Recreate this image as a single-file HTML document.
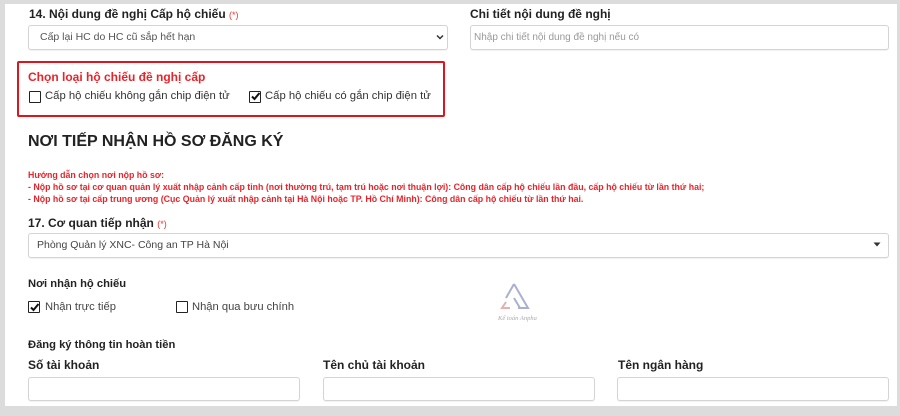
<!DOCTYPE html>
<html><head><meta charset="utf-8"><style>
*{margin:0;padding:0;box-sizing:border-box}
body{width:900px;height:416px;background:#dcdcdc;position:relative;overflow:hidden;font-family:"Liberation Sans","DejaVu Sans",sans-serif;color:#222}
#w{position:absolute;left:5px;top:4px;width:892px;height:402px;background:#fff}
.a{position:absolute;white-space:nowrap}
.lb{font-size:12px;font-weight:bold;color:#222}
.in{position:absolute;border:1px solid #d4d4d4;border-radius:3px;background:#fff;box-shadow:0 1px 1px rgba(0,0,0,.06)}
.ph{font-size:10.5px;color:#666}
.cb{position:absolute;width:12px;height:12px;border:1.5px solid #222;border-radius:1px;background:#fff}
.st{color:#e33;font-weight:normal;font-size:9px}
.red{color:#e8242b;font-size:8.8px;font-weight:bold}
</style></head><body>
<div id="w"></div>
<div class="a lb" style="left:29px;top:7px">14. Nội dung đề nghị Cấp hộ chiếu <span class="st">(*)</span></div>
<div class="in" style="left:28px;top:25px;width:420px;height:25px"></div>
<div class="a ph" style="left:40px;top:31px;color:#555">Cấp lại HC do HC cũ sắp hết hạn</div>
<svg class="a" style="left:436px;top:34px" width="8" height="6" viewBox="0 0 8 6"><path d="M1 1.5L4 4.5L7 1.5" stroke="#333" stroke-width="1.5" fill="none"/></svg>
<div class="a lb" style="left:470px;top:7px">Chi tiết nội dung đề nghị</div>
<div class="in" style="left:470px;top:25px;width:419px;height:25px"></div>
<div class="a" style="left:474px;top:32px;font-size:10px;color:#999">Nhập chi tiết nội dung đề nghị nếu có</div>
<div class="a" style="left:17px;top:61px;width:428px;height:56px;border:2px solid #e0141b;border-radius:2px"></div>
<div class="a" style="left:28px;top:70px;font-size:12px;font-weight:bold;color:#e8242b">Chọn loại hộ chiếu đề nghị cấp</div>
<div class="cb" style="left:29px;top:91px"></div>
<div class="a" style="left:45px;top:90px;font-size:11.3px;color:#333">Cấp hộ chiếu không gắn chip điện tử</div>
<div class="cb" style="left:249px;top:91px"></div>
<svg class="a" style="left:250px;top:91px" width="11" height="11" viewBox="0 0 11 11"><path d="M2 5.5L4.5 8L9.5 2" stroke="#111" stroke-width="2" fill="none"/></svg>
<div class="a" style="left:265px;top:90px;font-size:11.3px;color:#333">Cấp hộ chiếu có gắn chip điện tử</div>
<div class="a" style="left:28px;top:133px;font-size:16px;font-weight:bold;color:#222">NƠI TIẾP NHẬN HỒ SƠ ĐĂNG KÝ</div>
<div class="a red" style="left:28px;top:170px">Hướng dẫn chọn nơi nộp hồ sơ:</div>
<div class="a red" style="left:28px;top:182px">- Nộp hồ sơ tại cơ quan quản lý xuất nhập cảnh cấp tỉnh (nơi thường trú, tạm trú hoặc nơi thuận lợi): Công dân cấp hộ chiếu lần đầu, cấp hộ chiếu từ lần thứ hai;</div>
<div class="a red" style="left:28px;top:194px">- Nộp hồ sơ tại cấp trung ương (Cục Quản lý xuất nhập cảnh tại Hà Nội hoặc TP. Hồ Chí Minh): Công dân cấp hộ chiếu từ lần thứ hai.</div>
<div class="a lb" style="left:28px;top:216px">17. Cơ quan tiếp nhận <span class="st">(*)</span></div>
<div class="in" style="left:28px;top:233px;width:861px;height:25px"></div>
<div class="a ph" style="left:37px;top:239px;color:#444">Phòng Quản lý XNC- Công an TP Hà Nội</div>
<svg class="a" style="left:873px;top:242px" width="8" height="5" viewBox="0 0 8 5"><path d="M0.5 0.5L7.5 0.5L4 4.5Z" fill="#333"/></svg>
<div class="a lb" style="left:28px;top:278px;font-size:11.2px">Nơi nhận hộ chiếu</div>
<div class="cb" style="left:28px;top:301px"></div>
<svg class="a" style="left:29px;top:302px" width="11" height="11" viewBox="0 0 11 11"><path d="M2 5.5L4.5 8L9.5 2" stroke="#111" stroke-width="2" fill="none"/></svg>
<div class="a" style="left:45px;top:301px;font-size:11.2px;color:#444">Nhận trực tiếp</div>
<div class="cb" style="left:176px;top:301px"></div>
<div class="a" style="left:192px;top:301px;font-size:11.2px;color:#444">Nhận qua bưu chính</div>
<svg class="a" style="left:492px;top:280px" width="45" height="45" viewBox="0 0 45 45"><path d="M22 4L36 28H26M22 4L14 18" stroke="#a9b0d0" stroke-width="2" fill="none"/><path d="M22 18L28 28" stroke="#a9b0d0" stroke-width="2"/><path d="M14 22L10 28H18" stroke="#e6b0b0" stroke-width="2" fill="none"/><text x="6" y="40" font-size="6.5" fill="#aaa" font-style="italic" font-family="Liberation Serif,serif">Kế toán Anpha</text></svg>
<div class="a lb" style="left:28px;top:339px;font-size:11.2px">Đăng ký thông tin hoàn tiền</div>
<div class="a lb" style="left:28px;top:358px">Số tài khoản</div>
<div class="a lb" style="left:323px;top:358px">Tên chủ tài khoản</div>
<div class="a lb" style="left:618px;top:358px">Tên ngân hàng</div>
<div class="in" style="left:28px;top:377px;width:272px;height:24px"></div>
<div class="in" style="left:323px;top:377px;width:272px;height:24px"></div>
<div class="in" style="left:617px;top:377px;width:272px;height:24px"></div>
</body></html>
